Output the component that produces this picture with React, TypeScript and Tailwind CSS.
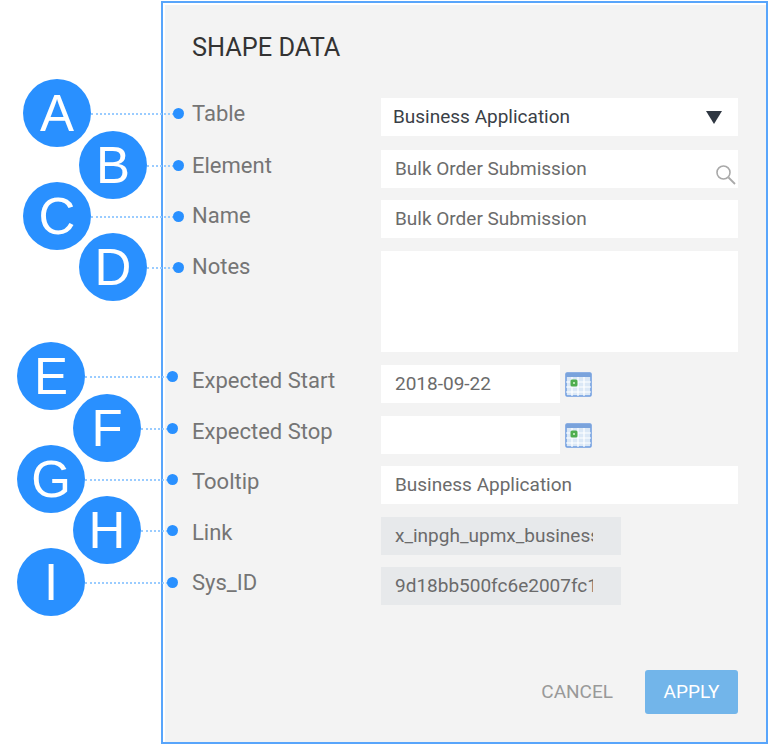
const callouts = [
  { letter: "A", cx: 57, cy: 113, dot: 178 },
  { letter: "B", cx: 113, cy: 165, dot: 178 },
  { letter: "C", cx: 57, cy: 216, dot: 178 },
  { letter: "D", cx: 113, cy: 267, dot: 178 },
  { letter: "E", cx: 51, cy: 376, dot: 172 },
  { letter: "F", cx: 107, cy: 428, dot: 172 },
  { letter: "G", cx: 51, cy: 479, dot: 172 },
  { letter: "H", cx: 107, cy: 530, dot: 172 },
  { letter: "I", cx: 51, cy: 582, dot: 172 },
];

function Callout({ letter, cx, cy, dot }: { letter: string; cx: number; cy: number; dot: number }) {
  return (
    <>
      <div
        className="absolute border-t-2 border-dotted border-[#9accff]"
        style={{ left: cx + 34, top: cy, width: dot - cx - 34 }}
      />
      <div className="absolute h-[11px] w-[11px] rounded-full bg-[#2990ff]" style={{ left: dot - 5.5, top: cy - 5 }} />
      <div
        className="absolute flex h-[68px] w-[68px] items-center justify-center rounded-full bg-[#2990ff] font-['Liberation_Sans',sans-serif] text-[51px] leading-none text-white"
        style={{ left: cx - 34, top: cy - 34 }}
      >
        {letter}
      </div>
    </>
  );
}

function CalendarIcon() {
  return (
    <svg width="27" height="26" viewBox="0 0 27 26" className="ml-[5px] mt-[7px] shrink-0">
      <rect x="1" y="1" width="25" height="23" rx="1" fill="#dbe8f6" stroke="#6c9be0" strokeWidth="1.5" />
      <rect x="1" y="1" width="25" height="4" fill="#7aa3dc" />
      <path d="M7 5v19M13 5v19M19 5v19M1 10h25M1 15h25M1 20h25" stroke="#fff" strokeWidth="1.2" />
      <rect x="5.5" y="7.5" width="7" height="7" rx="1.5" fill="#4fae4f" />
      <rect x="8" y="10" width="2" height="2" fill="#b9e4b0" />
    </svg>
  );
}

function Row({ label, children, mt = "mt-[13px]" }: { label: string; children: React.ReactNode; mt?: string }) {
  return (
    <div className={`flex items-start ${mt}`}>
      <div className="-mt-[3px] w-[189px] shrink-0 text-[22px] leading-[38px] text-[#757575]">{label}</div>
      {children}
    </div>
  );
}

const field = "flex h-[38px] items-center px-[14px] pt-px text-[19px] text-[#6b6b6b]";

export default function App() {
  return (
    <div className="relative h-[744px] w-[768px] overflow-hidden bg-white font-['Roboto',sans-serif]">
      <div className="ml-[161px] mt-px h-[743px] w-[607px] border-2 border-[#58a5fb] bg-white pl-[2px] pt-[2px]">
        <div className="flex h-full flex-col bg-[#f3f3f3] pl-[27px] pr-[28px]">
          <h1 className="mt-[26px] text-[25.3px] leading-[34px] text-[#333]">SHAPE DATA</h1>
          <Row label="Table" mt="mt-[33px]">
            <div className="flex h-[38px] w-[357px] items-center justify-between bg-white pl-3 pr-4 pt-px text-[19px] text-[#3a3f47]">
              <span>Business Application</span>
              <svg width="16" height="13" viewBox="0 0 16 13">
                <path d="M0 0h16L8 13z" fill="#2f3742" />
              </svg>
            </div>
          </Row>
          <Row label="Element" mt="mt-[14px]">
            <div className={`${field} relative w-[357px] bg-white`}>
              <span>Bulk Order Submission</span>
              <svg width="21" height="21" viewBox="0 0 21 21" fill="none" stroke="#a9a9a9" className="absolute right-[2px] top-[14px]">
                <circle cx="8.5" cy="8.5" r="6.5" strokeWidth="1.6" />
                <path d="M13.5 13.5 20 20" strokeWidth="1.8" />
              </svg>
            </div>
          </Row>
          <Row label="Name" mt="mt-[12px]">
            <div className={`${field} w-[357px] bg-white`}>Bulk Order Submission</div>
          </Row>
          <Row label="Notes">
            <div className="h-[101px] w-[357px] bg-white" />
          </Row>
          <Row label="Expected Start">
            <div className={`${field} w-[179px] bg-white`}>2018-09-22</div>
            <CalendarIcon />
          </Row>
          <Row label="Expected Stop">
            <div className={`${field} w-[179px] bg-white`} />
            <CalendarIcon />
          </Row>
          <Row label="Tooltip" mt="mt-[12px]">
            <div className={`${field} w-[357px] bg-white`}>Business Application</div>
          </Row>
          <Row label="Link">
            <div className={`${field} w-[240px] bg-[#e7e9eb] pr-7`}>
              <span className="block w-full overflow-hidden whitespace-nowrap">x_inpgh_upmx_business</span>
            </div>
          </Row>
          <Row label="Sys_ID" mt="mt-[12px]">
            <div className={`${field} w-[240px] bg-[#e7e9eb] pr-7`}>
              <span className="block w-full overflow-hidden whitespace-nowrap">9d18bb500fc6e2007fc1</span>
            </div>
          </Row>
          <div className="mt-[65px] flex items-center justify-end">
            <span className="mr-[32px] text-[19px] text-[#999]">CANCEL</span>
            <button className="h-[44px] w-[93px] rounded-[3px] bg-[#72b5ea] text-[19px] text-white">APPLY</button>
          </div>
        </div>
      </div>
      {callouts.map((c) => (
        <Callout key={c.letter} {...c} />
      ))}
    </div>
  );
}
